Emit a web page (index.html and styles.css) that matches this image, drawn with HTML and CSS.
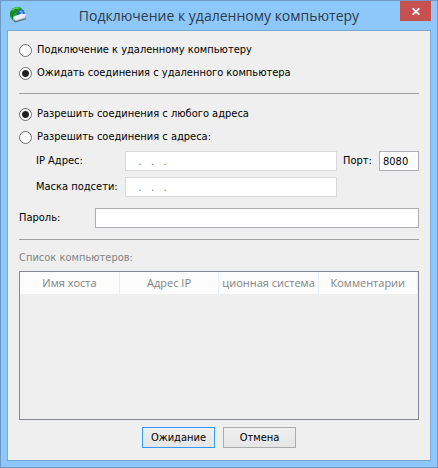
FILE: index.html
```html
<!DOCTYPE html>
<html lang="ru">
<head>
<meta charset="utf-8">
<title>Подключение к удаленному компьютеру</title>
<link rel="stylesheet" href="styles.css">
</head>
<body>
<div class="window">
  <header class="titlebar">
    <svg class="app-icon" viewBox="0 0 16 16" aria-hidden="true">
      <path d="M1 6 3 2.500 6 1h4l3 2-3 3-3 5-1 3-3-1-2-3z" fill="#23a52c"/>
      <path d="M2 9c-1-4 2-7 6-6M4 12c-2-3-1-6 4-8" fill="none" stroke="#08751d" stroke-width="1"/>
      <path d="M3 4l3-2h3" fill="none" stroke="#6fdc55" stroke-width="1"/>
      <path d="M7 7l3-4 4 1 1 4-7 2z" fill="#2457b8"/>
      <path d="M9 5l3-1 2 1-2 3z" fill="#5b97ee"/>
      <path d="M4 10l8-3 4 1v4L6 15l-2-2z" fill="#e8eef4"/>
      <path d="M4 11v2l2 2 10-3V9L6 13z" fill="#a3b3c2"/>
      <path d="M6 13l9-3" stroke="#f8fbff" stroke-width="1"/>
      <path d="M4 13l2 2 10-3" fill="none" stroke="#52677c" stroke-width="1"/>
    </svg>
    <h1 class="title">Подключение к удаленному компьютеру</h1>
    <button class="close" type="button" aria-label="Закрыть">
      <svg viewBox="0 0 8 7" width="8" height="7" aria-hidden="true"><path d="M.7.3 7.300 6.700M7.300.3.7 6.700" stroke="#fff" stroke-width="1.800"/></svg>
    </button>
  </header>
  <form class="client">
    <div class="options">
      <label class="option"><input type="radio" name="mode">Подключение к удаленному компьютеру</label>
      <label class="option"><input type="radio" name="mode" checked>Ожидать соединения с удаленного компьютера</label>
    </div>
    <hr>
    <div class="options">
      <label class="option"><input type="radio" name="source" checked>Разрешить соединения с любого адреса</label>
      <label class="option"><input type="radio" name="source">Разрешить соединения с адреса:</label>
    </div>
    <div class="address">
      <label for="ip">IP Адрес:</label>
      <input class="field" id="ip" type="text" value="   .   .   ." disabled>
      <label for="port">Порт:</label>
      <input class="field" id="port" type="text" value="8080">
      <label for="mask">Маска подсети:</label>
      <input class="field" id="mask" type="text" value="   .   .   ." disabled>
    </div>
    <div class="password">
      <label for="password">Пароль:</label>
      <input class="field" id="password" type="password">
    </div>
    <hr>
    <p class="caption" id="hosts">Список компьютеров:</p>
    <div class="list">
      <table aria-labelledby="hosts">
        <thead>
          <tr><th>Имя хоста</th><th>Адрес IP</th><th>ционная система</th><th>Комментарии</th></tr>
        </thead>
      </table>
    </div>
    <div class="actions">
      <button class="button primary" type="button">Ожидание</button>
      <button class="button" type="button">Отмена</button>
    </div>
  </form>
</div>
</body>
</html>
```
FILE: styles.css
```css
* {
  box-sizing: border-box;
}

body {
  margin: 0;
  font: 11px/14px "DejaVu Sans Condensed", "DejaVu Sans", sans-serif;
  color: #000;
}

.window {
  display: flex;
  flex-direction: column;
  min-height: 100vh;
  padding: 0 6px 6px;
  border: 1px solid #6d99c4;
  background: #8ec8fb;
}

.titlebar {
  display: flex;
  align-items: flex-start;
  height: 29px;
  padding-left: 2px;
}

.app-icon {
  width: 17px;
  height: 17px;
  margin-top: 5px;
}

.title {
  flex: 1;
  margin: 0;
  padding-left: 12px;
  text-align: center;
  font: 14px/30px "Open Sans", sans-serif;
  color: #2b3b4a;
  white-space: nowrap;
}

.close {
  display: flex;
  align-items: center;
  justify-content: center;
  width: 31px;
  height: 20px;
  padding: 0;
  border: 0;
  background: #c75050;
}

.client {
  display: flex;
  flex: 1;
  flex-direction: column;
  padding: 12px 11px;
  border: 1px solid #76a9d6;
  background: #efefef;
}

.options {
  display: flex;
  flex-direction: column;
  gap: 9px;
}

.option {
  display: flex;
  align-items: center;
  gap: 5px;
}

.option input {
  appearance: none;
  width: 13px;
  height: 13px;
  margin: 0;
  border: 1px solid #707070;
  border-radius: 50%;
  background: #fff;
}

.option input:checked {
  background: radial-gradient(circle, #212121 3px, #fff 4px);
}

hr {
  width: 100%;
  height: 1px;
  margin: 13px 0;
  border: 0;
  background: #a0a0a0;
}

.address {
  display: grid;
  grid-template-columns: 83px 1fr 30px 40px;
  gap: 6px;
  align-items: center;
  margin-top: 7px;
  padding-left: 17px;
}

.field {
  width: 100%;
  min-width: 0;
  height: 20px;
  padding: 0 3px;
  border: 1px solid #abadb3;
  background: #fff;
  font: inherit;
  color: #000;
}

.field:disabled {
  border-color: #d9d9d9;
  color: #6d6d6d;
}

.password {
  display: flex;
  align-items: center;
  margin-top: 11px;
}

.password label {
  flex: 0 0 76px;
}

.password + hr {
  margin: 11px 0;
}

.caption {
  margin: 0;
  color: #838383;
}

.list {
  flex: 1;
  min-height: 100px;
  margin-top: 6px;
  border: 1px solid #828790;
}

table {
  width: 100%;
  border-collapse: collapse;
  table-layout: fixed;
}

th {
  height: 22px;
  padding: 0 3px;
  border-right: 1px solid #e5eff8;
  background: #fcfcfc;
  font: 11px/20px "Open Sans", sans-serif;
  color: #838383;
  text-align: center;
  white-space: nowrap;
}

.actions {
  display: flex;
  justify-content: center;
  gap: 8px;
  margin-top: 7px;
}

.button {
  width: 73px;
  height: 21px;
  padding: 0;
  border: 1px solid #acacac;
  background: linear-gradient(#f0f0f0, #e5e5e5);
  font: inherit;
  color: #000;
}

.primary {
  border-color: #3399ff;
}
```
